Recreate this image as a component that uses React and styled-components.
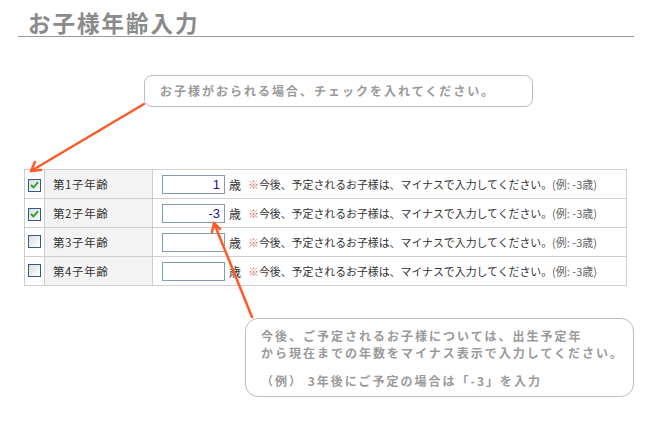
import styled, { createGlobalStyle } from "styled-components";

const GlobalStyle = createGlobalStyle`
  body {
    margin: 0;
    background: #fff;
    font-family: "Noto Sans CJK JP", "Liberation Sans", sans-serif;
  }
`;

const Page = styled.div`
  position: relative;
  width: 650px;
  height: 430px;
  overflow: hidden;
`;

const Header = styled.div`
  margin: 0 16px 0 18px;
  padding: 8px 0 0 10px;
  border-bottom: 1px solid #9a9a9a;
`;

const Title = styled.h1`
  margin: 0;
  font-size: 22.5px;
  line-height: 28px;
  font-weight: 700;
  color: #8a8a8a;
  letter-spacing: 2px;
`;

const Callout = styled.div`
  box-sizing: border-box;
  width: ${(p) => p.$width}px;
  min-height: ${(p) => p.$height}px;
  margin: ${(p) => p.$top}px 0 0 ${(p) => p.$left}px;
  padding: ${(p) => p.$pad};
  border: 1px solid #bdbdbd;
  border-radius: ${(p) => p.$radius}px;
  background: #fff;
  color: #9a9a9a;
  font-size: 12px;
  font-weight: 700;
  letter-spacing: 2px;
  line-height: 17px;
`;

const CalloutLine = styled.div`
  margin-top: ${(p) => p.$gap || 0}px;
  white-space: nowrap;
`;

const Table = styled.table`
  margin: 62px 0 0 24px;
  width: 603px;
  border-collapse: collapse;
  font-size: 11px;
  color: #333;
`;

const Row = styled.tr`
  height: 29px;
`;

const CheckCell = styled.td`
  width: 19px;
  padding: 0;
  border: 1px solid #cfcfcf;
  text-align: center;
  vertical-align: middle;
`;

const LabelCell = styled.td`
  width: 99px;
  padding: 0 0 0 8px;
  border: 1px solid #cfcfcf;
  background: #f3f3f3;
  font-size: 11.5px;
  letter-spacing: 0.6px;
  color: #333;
`;

const InputCell = styled.td`
  padding: 0 0 0 9px;
  border: 1px solid #cfcfcf;
  white-space: nowrap;
`;

const FieldRow = styled.div`
  display: flex;
  align-items: center;
`;

const Box = styled.span`
  display: inline-flex;
  align-items: center;
  justify-content: center;
  box-sizing: border-box;
  width: 13px;
  height: 13px;
  margin-top: 2px;
  border: 1px solid #2f5c8e;
  background: linear-gradient(135deg, #dcdcd7, #fff);
`;

const AgeInput = styled.input`
  box-sizing: border-box;
  width: 63px;
  height: 19px;
  padding: 0 4px 0 2px;
  border: 1px solid #7f9db9;
  text-align: right;
  font-family: "Liberation Sans", sans-serif;
  font-size: 13px;
  color: #2a0d9a;
  outline: none;
`;

const Unit = styled.span`
  margin-left: 4px;
  font-size: 12px;
  color: #333;
`;

const Note = styled.span`
  margin-left: 7px;
  font-size: 10.9px;
  color: #333;
`;

const Mark = styled.span`
  color: #d07070;
`;

const Example = styled.span`
  color: #666;
  font-size: 11px;
`;

const Arrows = styled.svg`
  position: absolute;
  left: 0;
  top: 0;
  pointer-events: none;
`;

function Check({ on }) {
  return (
    <Box>
      {on && (
        <svg width="9" height="8" viewBox="0 0 9 8">
          <path d="M1 4 L3.5 6.5 L8 1.2" fill="none" stroke="#21a121" strokeWidth="1.8" />
        </svg>
      )}
    </Box>
  );
}

const rows = [
  { n: 1, on: true, value: "1" },
  { n: 2, on: true, value: "-3" },
  { n: 3, on: false, value: "" },
  { n: 4, on: false, value: "" },
];

export default function App() {
  return (
    <Page>
      <GlobalStyle />
      <Header>
        <Title>お子様年齢入力</Title>
      </Header>

      <Callout $width={389} $height={32} $top={38} $left={144} $radius={8} $pad="6px 0 0 15px">
        <CalloutLine>お子様がおられる場合、チェックを入れてください。</CalloutLine>
      </Callout>

      <Table>
        <tbody>
          {rows.map((r) => (
            <Row key={r.n}>
              <CheckCell>
                <Check on={r.on} />
              </CheckCell>
              <LabelCell>第{r.n}子年齢</LabelCell>
              <InputCell>
                <FieldRow>
                  <AgeInput defaultValue={r.value} />
                  <Unit>歳</Unit>
                  <Note>
                    <Mark>※</Mark>今後、予定されるお子様は、マイナスで入力してください。
                    <Example>(例: -3歳)</Example>
                  </Note>
                </FieldRow>
              </InputCell>
            </Row>
          ))}
        </tbody>
      </Table>

      <Callout $width={389} $height={79} $top={32} $left={245} $radius={13} $pad="8px 0 0 15px">
        <CalloutLine>今後、ご予定されるお子様については、出生予定年</CalloutLine>
        <CalloutLine>から現在までの年数をマイナス表示で入力してください。</CalloutLine>
        <CalloutLine $gap={11}>（例） 3年後にご予定の場合は「-3」を入力</CalloutLine>
      </Callout>

      <Arrows width="650" height="430" viewBox="0 0 650 430">
        <g stroke="#ff5a26" strokeWidth="2.5" fill="none" strokeLinecap="round">
          <path d="M144 104 L31 171" />
          <path d="M31 171 L41 170 M31 171 L35 162" />
          <path d="M252 317 L214 223" />
          <path d="M214 223 L212 232 M214 223 L220 229" />
        </g>
      </Arrows>
    </Page>
  );
}
